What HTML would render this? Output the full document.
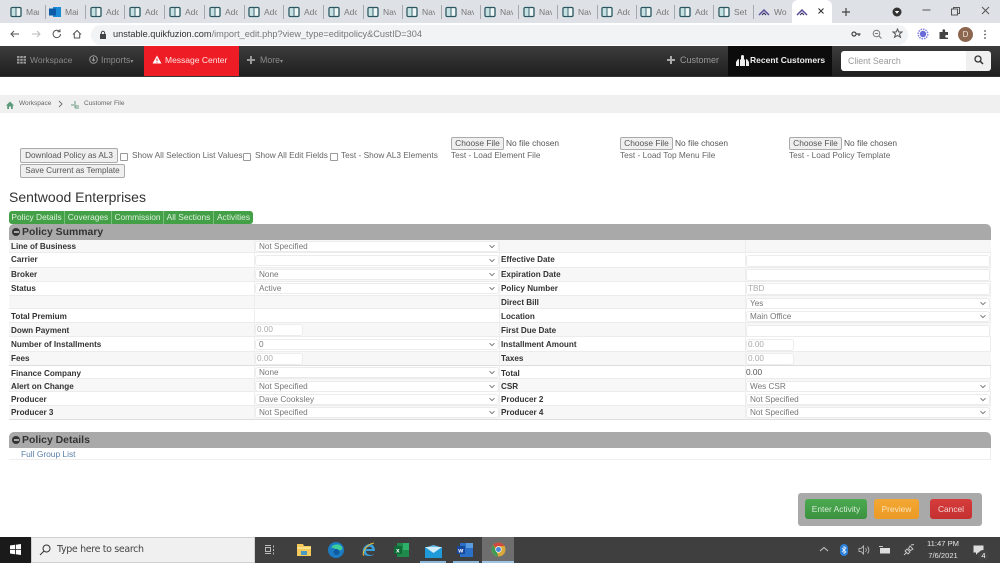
<!DOCTYPE html>
<html><head><meta charset="utf-8"><style>
html,body{margin:0;padding:0;background:#fff}
body{width:1000px;height:563px;overflow:hidden;position:relative;font-family:"Liberation Sans",sans-serif;color:#333}
#w{position:absolute;left:0;top:0;width:1000px;height:563px;overflow:hidden;filter:blur(.3px)}
.a{position:absolute;white-space:nowrap}
.tab{position:absolute;top:3px;height:20px;width:39px}
.tab svg{position:absolute;left:10px;top:3px}
.tab span{position:absolute;left:26px;top:4px;font-size:8.5px;color:#777;width:13px;overflow:hidden;white-space:nowrap}
.sep{position:absolute;top:5px;width:1px;height:14px;background:#a6aaaf}
.row{position:absolute;left:9px;width:982px;border-bottom:1px solid #ececec;box-sizing:border-box}
.g{background:#f7f7f7}
.v{position:absolute;top:240px;width:1px;height:180px;background:#eeeeee}
.l{position:absolute;left:11px;font-size:8.15px;line-height:11px;font-weight:bold;color:#333;white-space:nowrap}
.r{left:501px}
.sel{position:absolute;height:11px;box-sizing:border-box;background:#fff;border:1px solid #ececec;border-radius:3px;font-size:8.2px;color:#777;padding-left:3px;line-height:10px;white-space:nowrap}
.sel svg{position:absolute;right:2px;top:2px}
.inp{position:absolute;height:12px;box-sizing:border-box;background:#fff;border:1px solid #ececec;border-radius:3px;font-size:8.2px;color:#aaa;line-height:10px;padding-left:1px}
.btn{position:absolute;box-sizing:border-box;background:#efefef;border:1px solid #aaa;border-radius:2px;font-size:8.2px;color:#555;text-align:center;white-space:nowrap}
.t{position:absolute;font-size:8.3px;line-height:11px;color:#666;white-space:nowrap}
.cb{position:absolute;width:8px;height:8px;box-sizing:border-box;border:1px solid #999;border-radius:1px;background:#fff}
.pill{position:absolute;top:211px;height:13px;background:#43a047;color:#dff0df;font-size:8.4px;line-height:13px;text-align:center;white-space:nowrap;border-right:1px solid #7cc07f;box-sizing:border-box}
.head{position:absolute;left:9px;width:982px;height:16px;background:#a9a9a9;border-radius:5px 5px 0 0}
.head b{position:absolute;left:13px;top:2px;font-size:10.45px;line-height:13px;color:#333}
.minus{position:absolute;left:3px;top:4px;width:8px;height:8px;border-radius:50%;background:#333}
.minus:after{content:"";position:absolute;left:1.5px;top:3px;width:5px;height:2px;background:#a9a9a9}
.ab{position:absolute;top:499px;height:20px;border-radius:3px;font-size:8.4px;line-height:20px;text-align:center}
</style></head><body><div id="w">

<svg width="0" height="0" style="position:absolute"><defs>
<symbol id="bk" viewBox="0 0 12 12"><rect x="1" y="1.500" width="10" height="9" rx="1.200" fill="#eef6f6" stroke="#2a5660" stroke-width="1.300"/><path d="M6 2v8" stroke="#2a5660" stroke-width=".9"/><rect x="2" y="2.500" width="3.500" height="7" fill="#c4e2e4"/></symbol>
<symbol id="mt" viewBox="0 0 12 8"><path d="M1 7L6 2l5 5" fill="none" stroke="#5a4a9a" stroke-width="1.500"/><path d="M4 7l2-2 2 2" fill="none" stroke="#2a2a55" stroke-width="1"/></symbol>
<symbol id="ch" viewBox="0 0 8 5"><path d="M1.500 1.200L4 3.600l2.500-2.400" fill="none" stroke="#777" stroke-width="1"/></symbol>
</defs></svg>

<!-- Tab strip -->
<div class="a" style="left:0;top:0;width:1000px;height:23px;background:#dee1e6"></div>
<div class="tab" style="left:0"><svg width="12" height="12"><use href="#bk"/></svg><span>Mar</span></div>
<div class="sep" style="left:45px"></div>
<div class="tab" style="left:39px"><svg width="12" height="12"><rect x="4" y="1" width="8" height="10" fill="#1a8ad4"/><rect x="0" y="2.500" width="7" height="7" fill="#0a5ca8"/></svg><span>Mai</span></div>
<div class="sep" style="left:85px"></div>
<div class="tab" style="left:80px"><svg width="12" height="12"><use href="#bk"/></svg><span>Adc</span></div>
<div class="sep" style="left:124px"></div>
<div class="tab" style="left:119px"><svg width="12" height="12"><use href="#bk"/></svg><span>Adc</span></div>
<div class="sep" style="left:164px"></div>
<div class="tab" style="left:159px"><svg width="12" height="12"><use href="#bk"/></svg><span>Adc</span></div>
<div class="sep" style="left:204px"></div>
<div class="tab" style="left:199px"><svg width="12" height="12"><use href="#bk"/></svg><span>Adc</span></div>
<div class="sep" style="left:244px"></div>
<div class="tab" style="left:238px"><svg width="12" height="12"><use href="#bk"/></svg><span>Adc</span></div>
<div class="sep" style="left:283px"></div>
<div class="tab" style="left:278px"><svg width="12" height="12"><use href="#bk"/></svg><span>Adc</span></div>
<div class="sep" style="left:323px"></div>
<div class="tab" style="left:318px"><svg width="12" height="12"><use href="#bk"/></svg><span>Adc</span></div>
<div class="sep" style="left:363px"></div>
<div class="tab" style="left:357px"><svg width="12" height="12"><use href="#bk"/></svg><span>Nav</span></div>
<div class="sep" style="left:402px"></div>
<div class="tab" style="left:396px"><svg width="12" height="12"><use href="#bk"/></svg><span>Nav</span></div>
<div class="sep" style="left:441px"></div>
<div class="tab" style="left:435px"><svg width="12" height="12"><use href="#bk"/></svg><span>Nav</span></div>
<div class="sep" style="left:480px"></div>
<div class="tab" style="left:474px"><svg width="12" height="12"><use href="#bk"/></svg><span>Nav</span></div>
<div class="sep" style="left:518px"></div>
<div class="tab" style="left:513px"><svg width="12" height="12"><use href="#bk"/></svg><span>Nav</span></div>
<div class="sep" style="left:557px"></div>
<div class="tab" style="left:552px"><svg width="12" height="12"><use href="#bk"/></svg><span>Nav</span></div>
<div class="sep" style="left:597px"></div>
<div class="tab" style="left:591px"><svg width="12" height="12"><use href="#bk"/></svg><span>Adc</span></div>
<div class="sep" style="left:636px"></div>
<div class="tab" style="left:630px"><svg width="12" height="12"><use href="#bk"/></svg><span>Adc</span></div>
<div class="sep" style="left:674px"></div>
<div class="tab" style="left:669px"><svg width="12" height="12"><use href="#bk"/></svg><span>Adc</span></div>
<div class="sep" style="left:713px"></div>
<div class="tab" style="left:708px"><svg width="12" height="12"><use href="#bk"/></svg><span>Set</span></div>
<div class="sep" style="left:753px"></div>
<svg class="a" style="left:758px;top:8px" width="12" height="8"><use href="#mt"/></svg>
<div class="a" style="left:774px;top:7px;font-size:8.500px;color:#777">Wo</div>
<!-- Active tab -->
<div class="a" style="left:792px;top:0;width:40px;height:24px;background:#fff;border-radius:6px 6px 0 0"></div>
<svg class="a" style="left:796px;top:8px" width="12" height="8"><use href="#mt"/></svg>
<svg class="a" style="left:816px;top:6px" width="10" height="10"><path d="M2.500 2.500l5 5M7.500 2.500l-5 5" stroke="#333" stroke-width="1.100"/></svg>
<svg class="a" style="left:840px;top:6px" width="12" height="12"><path d="M6 2v8M2 6h8" stroke="#444" stroke-width="1.200"/></svg>
<svg class="a" style="left:891px;top:6px" width="12" height="12"><circle cx="6" cy="6" r="4.500" fill="#333"/><path d="M3.800 5h4.400L6 7.800z" fill="#fff"/></svg>
<svg class="a" style="left:921px;top:5px" width="12" height="12"><path d="M1.500 5h8" stroke="#555"/></svg>
<svg class="a" style="left:949px;top:4px" width="12" height="12"><path d="M2.500 5h6v6h-6zM4.500 5V3.500h6v6H8.500" fill="none" stroke="#555"/></svg>
<svg class="a" style="left:979px;top:4px" width="12" height="12"><path d="M3 3l7 7M10 3l-7 7" stroke="#555"/></svg>

<!-- Toolbar -->
<div class="a" style="left:0;top:23px;width:1000px;height:23px;background:#fff"></div>
<svg class="a" style="left:9px;top:28px" width="12" height="12"><path d="M10 6H2M5 3L2 6l3 3" fill="none" stroke="#555" stroke-width="1"/></svg>
<svg class="a" style="left:30px;top:28px" width="12" height="12"><path d="M2 6h8M7 3l3 3-3 3" fill="none" stroke="#bbb" stroke-width="1"/></svg>
<svg class="a" style="left:51px;top:28px" width="12" height="12"><path d="M9.500 6a3.700 3.700 0 1 1-1.100-2.700M9 1.300V3.800H6.500" fill="none" stroke="#555" stroke-width="1"/></svg>
<svg class="a" style="left:71px;top:28px" width="12" height="12"><path d="M2 6.500L6 2.500l4 4M3.300 5.500V10h5.400V5.500" fill="none" stroke="#555" stroke-width="1"/></svg>
<div class="a" style="left:91px;top:25px;width:817px;height:20px;border-radius:10px;background:#f1f3f4"></div>
<svg class="a" style="left:99px;top:30px" width="8" height="10"><rect x="1" y="4" width="6" height="5" fill="#444"/><path d="M2.300 4V3a1.700 1.700 0 0 1 3.400 0v1" fill="none" stroke="#444"/></svg>
<div class="a" style="left:113px;top:27px;font-size:9.200px;line-height:15px;color:#333">unstable.quikfuzion.com<span style="color:#777">/import_edit.php?view_type=editpolicy&amp;CustID=304</span></div>
<svg class="a" style="left:851px;top:29px" width="11" height="10"><circle cx="3" cy="5" r="2" fill="none" stroke="#444" stroke-width="1.200"/><path d="M5 5h4.500M8 5v2" stroke="#444" stroke-width="1.200"/></svg>
<svg class="a" style="left:872px;top:29px" width="11" height="11"><circle cx="4.500" cy="4.500" r="3.300" fill="none" stroke="#777"/><path d="M7 7l2.500 2.500M3 4.500h3" stroke="#777"/></svg>
<svg class="a" style="left:892px;top:28px" width="11" height="11"><path d="M5.500 1l1.300 3h3.200L7.500 6l1 3.300-3-1.800-3 1.800 1-3.300L1 4h3.200z" fill="none" stroke="#555"/></svg>
<svg class="a" style="left:917px;top:28px" width="12" height="12"><circle cx="6" cy="6" r="3.200" fill="#6a6ad8"/><circle cx="6" cy="6" r="4.800" fill="none" stroke="#8080e0" stroke-width="1.500" stroke-dasharray="1.500 1"/></svg>
<svg class="a" style="left:938px;top:28px" width="12" height="12"><path d="M1.500 4h3V2.500a1.300 1.300 0 0 1 2.600 0V4H10v3H8.500a1.300 1.300 0 0 0 0 2.600H10V11H1.500z" fill="#444"/></svg>
<div class="a" style="left:958px;top:27px;width:15px;height:15px;border-radius:50%;background:#8d6650;color:#f0e4dc;font-size:8px;line-height:15px;text-align:center">D</div>
<svg class="a" style="left:983px;top:29px" width="4" height="11"><circle cx="2" cy="2" r=".9" fill="#555"/><circle cx="2" cy="5.500" r=".9" fill="#555"/><circle cx="2" cy="9" r=".9" fill="#555"/></svg>

<!-- Nav bar -->
<div class="a" style="left:0;top:46px;width:1000px;height:31px;background:linear-gradient(#3c3c3c,#1f1f1f);border-bottom:1px solid #333;box-sizing:border-box"></div>
<svg class="a" style="left:17px;top:55px" width="9" height="9"><path d="M0 1h2.500v2H0zM3.250 1h2.500v2h-2.500zM6.500 1H9v2H6.500zM0 3.800h2.500v2H0zM3.250 3.800h2.500v2h-2.500zM6.500 3.800H9v2H6.500zM0 6.600h2.500v2H0zM3.250 6.600h2.500v2h-2.500zM6.500 6.600H9v2H6.500z" fill="#999"/></svg>
<div class="a" style="left:30px;top:55px;font-size:8.500px;line-height:11px;color:#8a8a8a">Workspace</div>
<svg class="a" style="left:89px;top:55px" width="9" height="9"><circle cx="4.500" cy="4.500" r="3.800" fill="none" stroke="#999"/><path d="M4.500 2v4M3 4.500l1.500 1.500L6 4.500" fill="none" stroke="#999"/></svg>
<div class="a" style="left:101px;top:55px;font-size:8.800px;line-height:11px;color:#8a8a8a">Imports<span style="font-size:6px">▾</span></div>
<div class="a" style="left:144px;top:46px;width:95px;height:30px;background:#ee1c25"></div>
<svg class="a" style="left:152px;top:55px" width="10" height="9"><path d="M5 .500L9.500 8.500H.5z" fill="#fff"/><path d="M5 3.500v2.500M5 6.800v.8" stroke="#ee1c25"/></svg>
<div class="a" style="left:165px;top:55px;font-size:8.500px;line-height:11px;color:#ffe4e4">Message Center</div>
<svg class="a" style="left:247px;top:56px" width="8" height="8"><path d="M4 0v8M0 4h8" stroke="#999" stroke-width="2"/></svg>
<div class="a" style="left:260px;top:55px;font-size:8.800px;line-height:11px;color:#8a8a8a">More<span style="font-size:6px">▾</span></div>
<svg class="a" style="left:667px;top:56px" width="8" height="8"><path d="M4 0v8M0 4h8" stroke="#aaa" stroke-width="2"/></svg>
<div class="a" style="left:680px;top:55px;font-size:9px;line-height:11px;color:#999">Customer</div>
<div class="a" style="left:728px;top:46px;width:104px;height:30px;background:#0c0c0c"></div>
<svg class="a" style="left:736px;top:55px" width="13" height="12"><path d="M6.500 0a1.500 1.500 0 0 1 1.500 1.500v3h1V11H4V4.500h1v-3A1.500 1.500 0 0 1 6.500 0zM2 4a1 1 0 0 1 1 1v6H0V7zM11 4a1 1 0 0 0-1 1v6h3V7z" fill="#eee"/></svg>
<div class="a" style="left:750px;top:55px;font-size:8.500px;line-height:11px;font-weight:bold;color:#eee">Recent Customers</div>
<div class="a" style="left:841px;top:51px;width:125px;height:20px;background:#fff;border-radius:3px 0 0 3px;font-size:8.800px;line-height:20px;color:#999;text-indent:7px">Client Search</div>
<div class="a" style="left:966px;top:51px;width:25px;height:20px;background:#f0f0f0;border-radius:0 3px 3px 0"></div>
<svg class="a" style="left:974px;top:55px" width="10" height="10"><circle cx="4" cy="4" r="3" fill="none" stroke="#333" stroke-width="1.300"/><path d="M6.300 6.300L9 9" stroke="#333" stroke-width="1.500"/></svg>

<!-- Breadcrumb -->
<div class="a" style="left:0;top:95px;width:1000px;height:18px;background:#f0f0f0"></div>
<svg class="a" style="left:6px;top:101px" width="8" height="8"><path d="M4 .500L8 4.500H6.800V8H5V5.500H3V8H1.200V4.500H0z" fill="#5a9a7a"/></svg>
<div class="a" style="left:19px;top:100px;font-size:6.500px;line-height:8px;color:#666">Workspace</div>
<svg class="a" style="left:58px;top:100px" width="6" height="8"><path d="M1 1l3 3-3 3" fill="none" stroke="#777"/></svg>
<svg class="a" style="left:71px;top:101px" width="8" height="8"><path d="M4 0v7M0 4h3M4 7h4M4 5h4" stroke="#6a9a80" fill="none"/></svg>
<div class="a" style="left:84px;top:100px;font-size:6.500px;line-height:8px;color:#666">Customer File</div>

<!-- Test controls -->
<div class="btn" style="left:20px;top:148px;width:98px;height:15px;line-height:13px">Download Policy as AL3</div>
<div class="cb" style="left:120px;top:153px"></div>
<div class="t" style="left:132px;top:150px">Show All Selection List Values</div>
<div class="cb" style="left:243px;top:153px"></div>
<div class="t" style="left:255px;top:150px">Show All Edit Fields</div>
<div class="cb" style="left:330px;top:153px"></div>
<div class="t" style="left:341px;top:150px">Test - Show AL3 Elements</div>
<div class="btn" style="left:20px;top:164px;width:105px;height:14px;line-height:12px">Save Current as Template</div>

<div class="btn" style="left:451px;top:137px;width:53px;height:13px;line-height:11px;font-size:8.400px">Choose File</div>
<div class="t" style="left:506px;top:138px;color:#555;font-size:8.400px">No file chosen</div>
<div class="t" style="left:451px;top:150px">Test - Load Element File</div>
<div class="btn" style="left:620px;top:137px;width:53px;height:13px;line-height:11px;font-size:8.400px">Choose File</div>
<div class="t" style="left:675px;top:138px;color:#555;font-size:8.400px">No file chosen</div>
<div class="t" style="left:620px;top:150px">Test - Load Top Menu File</div>
<div class="btn" style="left:789px;top:137px;width:53px;height:13px;line-height:11px;font-size:8.400px">Choose File</div>
<div class="t" style="left:844px;top:138px;color:#555;font-size:8.400px">No file chosen</div>
<div class="t" style="left:789px;top:150px">Test - Load Policy Template</div>

<div class="a" style="left:9px;top:189px;font-size:14px;line-height:17px;color:#333">Sentwood Enterprises</div>

<div class="pill" style="left:9px;width:56px;border-radius:3px 0 0 3px">Policy Details</div>
<div class="pill" style="left:65px;width:47px">Coverages</div>
<div class="pill" style="left:112px;width:52px">Commission</div>
<div class="pill" style="left:164px;width:50px">All Sections</div>
<div class="pill" style="left:214px;width:39px;border-radius:0 3px 3px 0;border-right:0">Activities</div>

<!-- Policy Summary -->
<div class="head" style="top:224px"><div class="minus"></div><b>Policy Summary</b></div>
<div class="a" style="left:9px;top:240px;width:982px;height:180px;border-right:1px solid #eee;box-sizing:border-box"></div>

<div class="row g" style="top:240px;height:13px"></div>
<div class="row" style="top:253px;height:15px"></div>
<div class="row g" style="top:268px;height:14px"></div>
<div class="row" style="top:282px;height:14px"></div>
<div class="row g" style="top:296px;height:13px"></div>
<div class="row" style="top:309px;height:14px"></div>
<div class="row g" style="top:323px;height:14px"></div>
<div class="row" style="top:337px;height:15px"></div>
<div class="row g" style="top:352px;height:14px;border-bottom-color:#ddd"></div>
<div class="row" style="top:366px;height:13px"></div>
<div class="row g" style="top:379px;height:13px"></div>
<div class="row" style="top:392px;height:14px"></div>
<div class="row g" style="top:406px;height:14px;border-bottom-color:#ddd"></div>
<div class="v" style="left:254px"></div>
<div class="v" style="left:499px"></div>
<div class="v" style="left:745px"></div>

<div class="l" style="top:241px">Line of Business</div>
<div class="sel" style="left:255px;top:241px;width:244px">Not Specified<svg width="8" height="5"><use href="#ch"/></svg></div>

<div class="l" style="top:254px">Carrier</div>
<div class="sel" style="left:255px;top:255px;width:244px"><svg width="8" height="5"><use href="#ch"/></svg></div>
<div class="l r" style="top:254px">Effective Date</div>
<div class="inp" style="left:746px;top:255px;width:244px"></div>

<div class="l" style="top:269px">Broker</div>
<div class="sel" style="left:255px;top:269px;width:244px">None<svg width="8" height="5"><use href="#ch"/></svg></div>
<div class="l r" style="top:269px">Expiration Date</div>
<div class="inp" style="left:746px;top:269px;width:244px"></div>

<div class="l" style="top:283px">Status</div>
<div class="sel" style="left:255px;top:283px;width:244px">Active<svg width="8" height="5"><use href="#ch"/></svg></div>
<div class="l r" style="top:283px">Policy Number</div>
<div class="inp" style="left:746px;top:283px;width:244px">TBD</div>

<div class="l r" style="top:297px">Direct Bill</div>
<div class="sel" style="left:746px;top:298px;width:244px">Yes<svg width="8" height="5"><use href="#ch"/></svg></div>

<div class="l" style="top:311px">Total Premium</div>
<div class="l r" style="top:311px">Location</div>
<div class="sel" style="left:746px;top:311px;width:244px">Main Office<svg width="8" height="5"><use href="#ch"/></svg></div>

<div class="l" style="top:325px">Down Payment</div>
<div class="inp" style="left:255px;top:324px;width:48px">0.00</div>
<div class="l r" style="top:325px">First Due Date</div>
<div class="inp" style="left:746px;top:325px;width:244px"></div>

<div class="l" style="top:339px">Number of Installments</div>
<div class="sel" style="left:255px;top:339px;width:244px">0<svg width="8" height="5"><use href="#ch"/></svg></div>
<div class="l r" style="top:339px">Installment Amount</div>
<div class="inp" style="left:746px;top:339px;width:48px">0.00</div>

<div class="l" style="top:353px">Fees</div>
<div class="inp" style="left:255px;top:353px;width:48px">0.00</div>
<div class="l r" style="top:353px">Taxes</div>
<div class="inp" style="left:746px;top:353px;width:48px">0.00</div>

<div class="l" style="top:368px">Finance Company</div>
<div class="sel" style="left:255px;top:367px;width:244px">None<svg width="8" height="5"><use href="#ch"/></svg></div>
<div class="l r" style="top:368px">Total</div>
<div class="t" style="left:746px;top:367px;color:#555">0.00</div>

<div class="l" style="top:381px">Alert on Change</div>
<div class="sel" style="left:255px;top:381px;width:244px">Not Specified<svg width="8" height="5"><use href="#ch"/></svg></div>
<div class="l r" style="top:381px">CSR</div>
<div class="sel" style="left:746px;top:381px;width:244px">Wes CSR<svg width="8" height="5"><use href="#ch"/></svg></div>

<div class="l" style="top:394px">Producer</div>
<div class="sel" style="left:255px;top:394px;width:244px">Dave Cooksley<svg width="8" height="5"><use href="#ch"/></svg></div>
<div class="l r" style="top:394px">Producer 2</div>
<div class="sel" style="left:746px;top:394px;width:244px">Not Specified<svg width="8" height="5"><use href="#ch"/></svg></div>

<div class="l" style="top:407px">Producer 3</div>
<div class="sel" style="left:255px;top:407px;width:244px">Not Specified<svg width="8" height="5"><use href="#ch"/></svg></div>
<div class="l r" style="top:407px">Producer 4</div>
<div class="sel" style="left:746px;top:407px;width:244px">Not Specified<svg width="8" height="5"><use href="#ch"/></svg></div>

<!-- Policy Details -->
<div class="head" style="top:432px"><div class="minus"></div><b>Policy Details</b></div>
<div class="a" style="left:9px;top:448px;width:982px;height:12px;border-bottom:1px solid #eee;border-right:1px solid #eee;box-sizing:border-box"></div>
<div class="a" style="left:21px;top:448px;font-size:8.400px;line-height:12px;color:#5b7fa6">Full Group List</div>

<!-- Action panel -->
<div class="a" style="left:798px;top:493px;width:184px;height:33px;background:#a9a9a9;border-radius:3px"></div>
<div class="ab" style="left:805px;width:62px;background:linear-gradient(#4bab50,#3b9140);color:#d8ecd8">Enter Activity</div>
<div class="ab" style="left:874px;width:45px;background:linear-gradient(#f4a733,#ea9a25);color:#fbe3b8">Preview</div>
<div class="ab" style="left:930px;width:42px;background:linear-gradient(#d63c3c,#c43030);color:#f6d5d5">Cancel</div>

<!-- Taskbar -->
<div class="a" style="left:0;top:537px;width:1000px;height:26px;background:#3f3f3f"></div>
<div class="a" style="left:0;top:537px;width:31px;height:26px;background:#1a1a1a"></div>
<svg class="a" style="left:10px;top:544px" width="11" height="11"><path d="M0 1.500L5 .8V5H0zM5.800.7L11 0v5H5.800zM0 5.800h5V10.200L0 9.500zM5.800 5.800H11V11l-5.200-.7z" fill="#fff"/></svg>
<div class="a" style="left:31px;top:537px;width:224px;height:26px;background:#f0f0f0;box-sizing:border-box;border:1px solid #d0d0d0"></div>
<svg class="a" style="left:39px;top:544px" width="12" height="12"><circle cx="7.500" cy="4.500" r="3.500" fill="none" stroke="#333"/><path d="M5 7l-4 4" stroke="#333"/></svg>
<div class="a" style="left:57px;top:543px;font-size:9.500px;line-height:14px;color:#444;font-family:'DejaVu Sans','Liberation Sans',sans-serif;letter-spacing:-.35px">Type here to search</div>
<svg class="a" style="left:264px;top:544px" width="12" height="12"><path d="M1 1.500h6M1 9.500h6M1.500 3.500h5v4h-5zM9.500 1.500v2M9.500 5v2M9.500 8.500v2" fill="none" stroke="#bbb"/></svg>
<svg class="a" style="left:296px;top:543px" width="16" height="14"><path d="M1 1h6l1 2h7v10H1z" fill="#f5c95a"/><rect x="1" y="4" width="14" height="2" fill="#fbe08a"/><rect x="5" y="8" width="6" height="4" fill="#4a9ac8"/></svg>
<svg class="a" style="left:328px;top:542px" width="16" height="16"><circle cx="8" cy="8" r="8" fill="#1b7cc4"/><path d="M3 6a6 5 0 0 1 11-1c1 3-2 4-4 3-2-.5-5-3-7-2z" fill="#3fcf9a"/><circle cx="8.500" cy="10" r="3" fill="#0f5aa0"/></svg>
<svg class="a" style="left:361px;top:542px" width="16" height="16"><path d="M14 9H5c0 4 5 5 8 3-2 3-10 3-11-2C1 6 5 2 9 2c3 0 5 3 5 7zM5 7h6c0-3-5-3-6 0z" fill="#3aa0dc"/><path d="M3 13C1 15 2 3 13 1" fill="none" stroke="#e8b830" stroke-width="1"/></svg>
<svg class="a" style="left:394px;top:543px" width="15" height="14"><rect x="3" y="0" width="12" height="14" fill="#1f8a4c"/><rect x="9" y="0" width="6" height="7" fill="#2fb06a"/><rect x="0" y="3" width="8" height="8" fill="#0e6b38"/><text x="2" y="9.500" font-size="6.500" font-weight="bold" fill="#fff" font-family="Liberation Sans">x</text></svg>
<svg class="a" style="left:425px;top:545px" width="17" height="13"><rect x="0" y="2" width="17" height="11" fill="#1f9ad8"/><path d="M0 2h17L8.500 8z" fill="#d0ecfa"/><path d="M2 2L8.500 0 15 2z" fill="#64bde8"/></svg>
<div class="a" style="left:420px;top:561px;width:26px;height:2px;background:#8cb8dc"></div>
<svg class="a" style="left:457px;top:543px" width="16" height="14"><rect x="3" y="0" width="13" height="14" fill="#2a6fc8"/><rect x="9" y="0" width="7" height="5" fill="#5a9ae0"/><rect x="0" y="3" width="8" height="8" fill="#16479a"/><text x="1.300" y="9.500" font-size="6.500" font-weight="bold" fill="#fff" font-family="Liberation Sans">w</text></svg>
<div class="a" style="left:453px;top:561px;width:26px;height:2px;background:#8cb8dc"></div>
<div class="a" style="left:482px;top:537px;width:32px;height:26px;background:#6e6e6e"></div>
<svg class="a" style="left:491px;top:542px" width="15" height="15"><circle cx="7.500" cy="7.500" r="7" fill="#d8a93a"/><path d="M7.500.5a7 7 0 0 1 6 3.500H7.500a3.500 3.500 0 0 0-3 1.800L2.200 3A7 7 0 0 1 7.500.5z" fill="#cf4a3c"/><path d="M2.200 3l3 5.200 2 6.300A7 7 0 0 1 2.200 3z" fill="#3f9a55"/><circle cx="7.500" cy="7.500" r="3.200" fill="#fff"/><circle cx="7.500" cy="7.500" r="2.500" fill="#4a86d8"/></svg>
<div class="a" style="left:482px;top:561px;width:32px;height:2px;background:#a0c4e4"></div>

<svg class="a" style="left:819px;top:546px" width="10" height="7"><path d="M1 5l4-3.500L9 5" fill="none" stroke="#ccc"/></svg>
<div class="a" style="left:840px;top:544px;width:8px;height:12px;border-radius:4px;background:#2a7fd8"></div>
<svg class="a" style="left:841px;top:546px" width="6" height="8"><path d="M1 2l4 4-2 1.500v-7L5 2 1 6" fill="none" stroke="#fff" stroke-width=".7"/></svg>
<svg class="a" style="left:858px;top:545px" width="12" height="10"><path d="M1 3.500h2L5.500 1v8L3 6.500H1zM7.500 3a3 3 0 0 1 0 4M9.500 1.500a5 5 0 0 1 0 7" fill="none" stroke="#ccc" stroke-width=".8"/></svg>
<svg class="a" style="left:879px;top:546px" width="12" height="8"><rect x="1" y="2" width="10" height="5.500" fill="#ddd"/><path d="M0 .5h4" stroke="#ccc"/></svg>
<svg class="a" style="left:903px;top:544px" width="12" height="12"><path d="M1 11l3-3M4 5l3 3-2 2-3-3zM7 2l3 3-2.500 1.500-2-2zM8 1l3-.5" fill="none" stroke="#ccc" stroke-width=".9"/></svg>
<div class="a" style="left:918px;top:538px;width:50px;font-size:7.600px;line-height:12px;color:#e6e6e6;text-align:center">11:47 PM<br>7/6/2021</div>
<svg class="a" style="left:973px;top:545px" width="12" height="11"><path d="M.5.500h10v7H5L3 10V7.500H.5z" fill="#ddd"/></svg>
<div class="a" style="left:978px;top:550px;width:11px;height:11px;border-radius:50%;background:#444;color:#fff;font-size:7.500px;line-height:11px;text-align:center">4</div>

</div></body></html>
